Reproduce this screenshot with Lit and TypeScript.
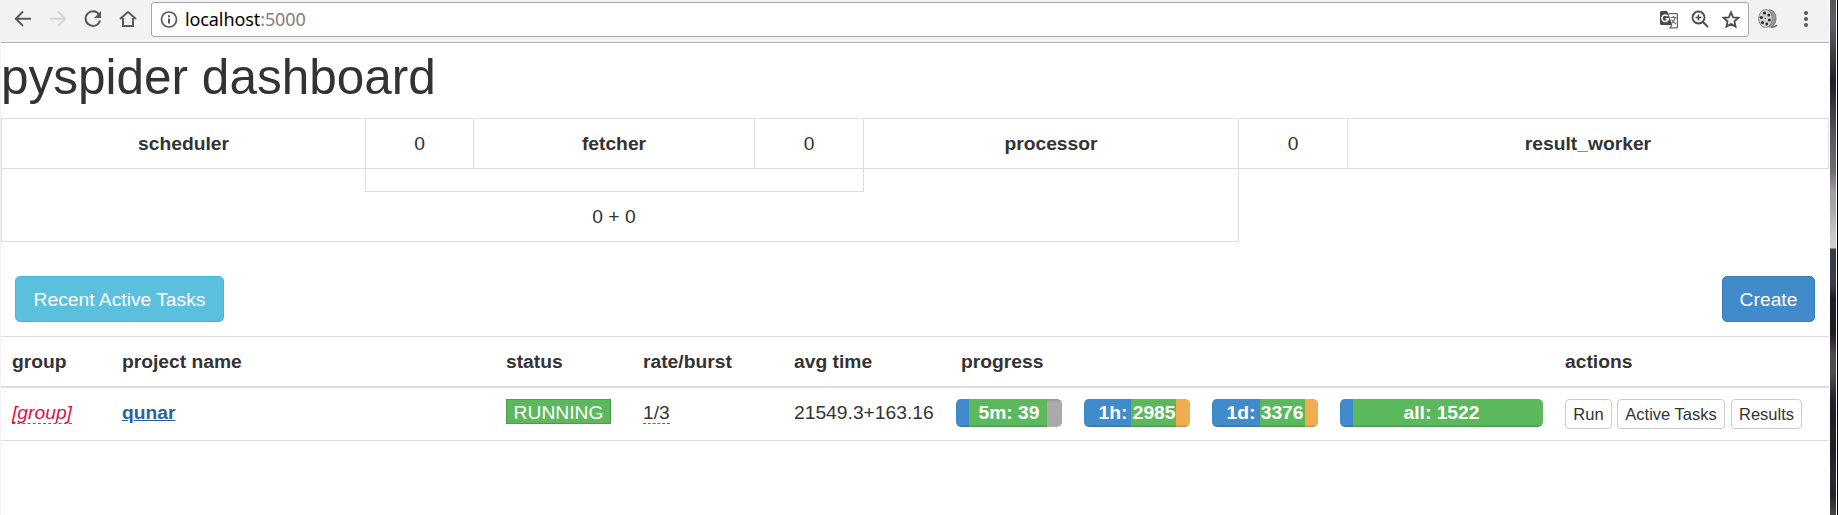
import { LitElement, html, css, svg } from "lit";
import { customElement, property } from "lit/decorators.js";

const icon = (body: unknown, w = 20, h = 20) =>
  html`<svg width=${w} height=${h} viewBox="0 0 ${w} ${h}" fill="none" stroke="#5a5a5a" stroke-width="2">${body}</svg>`;

@customElement("browser-bar")
class BrowserBar extends LitElement {
  static styles = css`
    :host { display: flex; height: 42px; background: #f2f2f2; border-bottom: 1px solid #b2b2b2; align-items: flex-start; box-sizing: content-box; }
    svg { display: block; flex: none; }
    .nav { display: flex; gap: 15px; padding: 9px 0 0 12px; width: 150px; box-sizing: border-box; flex: none; }
    .url { display: flex; flex: none; width: 1598px; height: 35px; margin-top: 2px; box-sizing: border-box; border: 1px solid #a8a8a8; border-radius: 3px; background: #fff; padding: 6px 7px 0 7px; }
    .host { flex: 1; font: 18px/22px "Noto Sans", sans-serif; letter-spacing: -0.1px; color: #000; padding-left: 6px; margin-top: -1px; }
    .port { color: #808080; }
    .tools { display: flex; gap: 11px; }
    .ext { display: flex; gap: 18px; padding: 8px 0 0 8px; }
  `;
  render() {
    return html`
      <div class="nav">
        ${icon(svg`<path d="M18 9.7H3M10 2.5 2.8 9.7l7.2 7.2"/>`)}
        ${icon(svg`<path stroke="#d4d4d4" d="M2 9.7h15M10 2.5l7.2 7.2-7.2 7.2"/>`)}
        ${icon(svg`<path d="M16 5.5a7.3 7.3 0 1 0 1 6"/><path fill="#5a5a5a" stroke="none" d="M18 2v7h-7z"/>`)}
        ${icon(svg`<path d="M2 10 10 3l8 7M5 9v8h10V9"/>`)}
      </div>
      <div class="url">
        ${icon(svg`<circle cx="10" cy="10.5" r="7.5" stroke-width="1.7"/><path d="M10 9.5v5M10 6.3v2"/>`)}
        <div class="host">localhost<span class="port">:5000</span></div>
        <div class="tools">
          ${icon(svg`<path stroke="none" fill="#484848" d="M2.500 2H8l1.500 3 3.500 11H2.500Q1 16 1 14.500v-11Q1 2 2.500 2z"/>
            <path stroke="#666" stroke-width="1.200" d="M9.500 4.600h8q.9 0 .9.9V18q0 .9-.9.9h-6.500l2-3M11.500 8.500h6M14.300 7v1.500M16.300 8.500q-1 4-4 6M12.500 10.500q2 3 4.500 4.500"/>
            <path stroke="#fff" stroke-width="1.600" d="M8.600 7.200A3.200 3.200 0 1 0 9.300 9.800H6.500"/>`)}
          ${icon(svg`<circle cx="8.500" cy="8.500" r="6" stroke="#4c4c4c" stroke-width="1.800"/><path stroke="#4c4c4c" d="m13 13 5 5"/><path stroke="#4c4c4c" stroke-width="1.600" d="M5.500 8.500h6M8.500 5.500v6"/>`)}
          ${icon(svg`<path stroke="#4c4c4c" stroke-width="1.800" d="m10 3.300 2.100 5 5.400.500-4.100 3.600 1.200 5.300-4.600-2.800-4.600 2.800 1.200-5.300L2.500 8.800l5.400-.500z"/>`)}
        </div>
      </div>
      <div class="ext">
        ${icon(svg`<ellipse cx="13" cy="10.500" rx="6" ry="8.500" fill="#999" stroke="#777" stroke-width="1"/>
          <path stroke="#777" stroke-width="2" d="M14 19q4 .5 6-2"/>
          <ellipse cx="8.500" cy="10.500" rx="6.800" ry="9" fill="#d2d2d2" stroke="#888" stroke-width="1"/>
          <g fill="#2c2c2c" stroke="none"><circle cx="7.500" cy="5" r="1.600"/><circle cx="11.800" cy="7" r="1.500"/><circle cx="4.300" cy="9.500" r="1.600"/><circle cx="8.300" cy="10.500" r=".8"/><circle cx="12.300" cy="12" r="1.500"/><circle cx="5.500" cy="14.500" r="1.600"/><circle cx="9.800" cy="16" r="1.400"/></g>`, 22, 22)}
        ${icon(svg`<g fill="#5a5a5a" stroke="none"><circle cx="9" cy="5" r="2"/><circle cx="9" cy="11" r="2"/><circle cx="9" cy="17" r="2"/></g>`, 18, 22)}
      </div>`;
  }
}

interface Segment { kind: string; size: number }

@customElement("progress-bar")
class ProgressBar extends LitElement {
  @property() label = "";
  @property({ attribute: false }) segments: Segment[] = [];
  static styles = css`
    :host { display: grid; height: 28px; border-radius: 5px; overflow: hidden; color: #fff; font-weight: 700; text-align: center; flex: none; }
    .track, .label { grid-area: 1 / 1; }
    .label { line-height: 27px; white-space: nowrap; }
    .track { display: flex; }
    .seg { box-shadow: inset 0 -1.500px 0 rgba(0, 0, 0, 0.15); }
    .pending { background: #428bca; }
    .success { background: #5cb85c; }
    .retry { background: #f0ad4e; }
    .rest { background: #aaa; box-shadow: inset 0 2px 1px rgba(0, 0, 0, 0.1); }
  `;
  render() {
    return html`<div class="track">${this.segments.map(
        (s) => html`<div class="seg ${s.kind}" style="width:${s.size}px"></div>`
      )}</div><div class="label">${this.label}</div>`;
  }
}

const bars = [
  { label: "5m: 39", segments: [{ kind: "pending", size: 13 }, { kind: "success", size: 78 }, { kind: "rest", size: 15 }] },
  { label: "1h: 2985", segments: [{ kind: "pending", size: 47 }, { kind: "success", size: 45 }, { kind: "retry", size: 14 }] },
  { label: "1d: 3376", segments: [{ kind: "pending", size: 48 }, { kind: "success", size: 45 }, { kind: "retry", size: 13 }] },
  { label: "all: 1522", segments: [{ kind: "pending", size: 13 }, { kind: "success", size: 190 }] },
];

@customElement("app-root")
class AppRoot extends LitElement {
  static styles = css`
    :host { display: flex; height: 515px; overflow: hidden; background: #fff; font: 19.250px/27.500px "Liberation Sans", Arial, sans-serif; color: #333; }
    .page { width: 1828px; flex: none; border-left: 1px solid #f2f2f2; }
    .edge { flex: none; width: 6px; margin-left: 1px; border-right: 1px solid #fff; background: linear-gradient(#555 0, #606063 22px, #424249 50px, #1e1e2a 82px, #42424a 115px, #5a5a5e 140px, #707074 172px, #a29da2 192px, #a9a9ab 210px, #c6c6c6 232px, #d0d0d0 248px, #3a3c46 249px, #3b3d47 285px, #1c1c29 298px, #241c20 334px, #4c4c50 355px, #505052 373px, #24242f 398px, #1d1d29 420px, #2b2022 432px, #1e1e2c 450px, #2b2b33 475px, #24242d 495px, #48484b 515px); }
    .black { flex: none; width: 1px; background: #000; }
    h1 { margin: 0; height: 75px; font-size: 49.500px; line-height: 67px; font-weight: 400; }
    .queues { display: grid; grid-template-columns: 364px 108px 281px 109px 375px 109px 481px; height: 51px; box-sizing: border-box; border: 1px solid #ddd; border-right: 0; text-align: center; line-height: 49px; width: 1828px; }
    .queues > div { border-right: 1px solid #ddd; }
    .stage { font-weight: 700; }
    .loop { width: 1238px; height: 73px; box-sizing: border-box; border: 1px solid #ddd; border-top: 0; text-align: center; }
    .inner { width: 499px; height: 23px; box-sizing: border-box; border: 1px solid #ddd; border-top: 0; margin-left: 363px; }
    .sum { line-height: 49px; padding-right: 12px; }
    .toolbar { display: flex; justify-content: space-between; padding: 34px 14px 14px 14px; }
    .btn { height: 46px; box-sizing: border-box; border: 1px solid; border-radius: 5px; color: #fff; line-height: 45px; text-align: center; }
    .info { width: 209px; background: #5bc0de; border-color: #46b8da; }
    .primary { width: 93px; background: #428bca; border-color: #357ebd; }
    .row { display: grid; grid-template-columns: 110px 384px 137px 151px 162px 609px 1fr; padding-left: 11px; white-space: nowrap; }
    .head { font-weight: 700; height: 52px; line-height: 49px; border-top: 1px solid #ddd; border-bottom: 2px solid #ddd; box-sizing: border-box; }
    .head .progress-head { padding-left: 5px; }
    .body { height: 53px; box-sizing: border-box; padding-top: 11px; border-bottom: 1px solid #ddd; align-items: start; }
    .edit { display: inline-block; height: 25px; line-height: 27px; box-sizing: border-box; border-bottom: 1px dashed #08c; }
    .empty { color: #d14; font-style: italic; }
    .name { color: #2a6496; font-weight: 700; text-decoration: underline; line-height: 27px; }
    .status { width: 105px; height: 25px; box-sizing: border-box; border: 1px solid #4a9e4a; background: #5cb85c; color: #fff; text-align: center; line-height: 25px; }
    .bars { display: flex; gap: 22px; }
    .actions { display: flex; }
    .small { height: 30px; box-sizing: border-box; border: 1px solid #ccc; border-radius: 4px; font-size: 16.500px; line-height: 29px; text-align: center; }
    .run { width: 47px; margin-right: 5px; }
    .active { width: 108px; margin-right: 6px; }
    .results { width: 71px; }
  `;
  render() {
    return html`
      <div class="page">
        <browser-bar></browser-bar>
        <h1>pyspider dashboard</h1>
        <div class="queues">
          <div class="stage">scheduler</div><div>0</div>
          <div class="stage">fetcher</div><div>0</div>
          <div class="stage">processor</div><div>0</div>
          <div class="stage">result_worker</div>
        </div>
        <div class="loop"><div class="inner"></div><div class="sum">0 + 0</div></div>
        <div class="toolbar">
          <div class="btn info">Recent Active Tasks</div>
          <div class="btn primary">Create</div>
        </div>
        <div class="row head">
          <div>group</div><div>project name</div><div>status</div><div>rate/burst</div>
          <div>avg time</div><div class="progress-head">progress</div><div>actions</div>
        </div>
        <div class="row body">
          <div><span class="edit empty">[group]</span></div>
          <div class="name">qunar</div>
          <div class="status">RUNNING</div>
          <div><span class="edit">1/3</span></div>
          <div>21549.3+163.16</div>
          <div class="bars">${bars.map((b) => html`<progress-bar .label=${b.label} .segments=${b.segments}></progress-bar>`)}</div>
          <div class="actions">
            <div class="small run">Run</div><div class="small active">Active Tasks</div><div class="small results">Results</div>
          </div>
        </div>
      </div>
      <div class="edge"></div><div class="black"></div>`;
  }
}
